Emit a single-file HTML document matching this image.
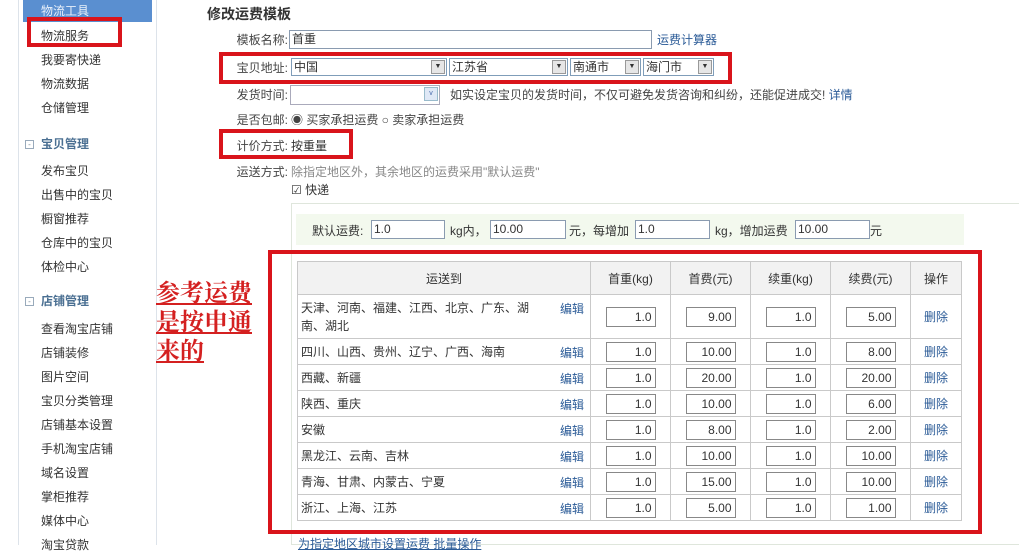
<!DOCTYPE html>
<html><head><meta charset="utf-8"><style>
*{margin:0;padding:0;box-sizing:border-box}
body{width:1019px;height:545px;overflow:hidden;background:#fff;font-family:"Liberation Sans","Noto Sans CJK SC",sans-serif;font-size:12px;color:#333;position:relative}
.a{position:absolute;white-space:nowrap}
.side{position:absolute;left:18px;top:0;width:139px;height:545px;border-left:1px solid #dde3ea;border-right:1px solid #dde3ea}
.it{position:absolute;left:41px;font-size:12px;color:#333}
.hd{position:absolute;left:41px;font-size:12px;font-weight:bold;color:#4a6f92}
.pm{position:absolute;left:25px;width:9px;height:9px;border:1px solid #9ab;font-size:8px;line-height:7px;text-align:center;color:#789}
.rb{position:absolute;border:4px solid #d9141b}
.lbl{position:absolute;width:80px;left:208px;text-align:right;color:#444}
.inp{position:absolute;border:1px solid #8a9bb0;background:#fff;height:19px;padding:1px 2px;font-size:12px;line-height:15px}
.sel{position:absolute;border:1px solid #7f9db9;background:#fff;height:18px;font-size:12px;line-height:16px;padding-left:2px}
.sel i{position:absolute;right:1px;top:1px;width:14px;height:14px;background:#e6e6e6;border:1px solid #999;font-style:normal;font-size:7px;text-align:center;line-height:12px}
.lk{color:#2b5b97}
table{position:absolute;left:297px;top:261px;border-collapse:collapse;width:665px}
td,th{border:1px solid #c9c9c9;font-weight:normal;font-size:12px}
th{background:#f2f2f2;height:33px}
td{height:26px}
td.r{padding-left:3px;position:relative}
td.r span{position:absolute;right:6px;top:5px;color:#2b5b97}
td.n{text-align:center}
td.n b{display:inline-block;width:50px;height:20px;border:1px solid #888;font-weight:normal;text-align:right;padding-right:3px;line-height:18px;vertical-align:middle}
td.d{text-align:center;color:#2b5b97}
</style></head><body>
<div class="side"></div>
<div class="a" style="left:23px;top:0;width:129px;height:22px;background:#5a8fd0"></div>
<div class="it" style="top:2px;color:#e8f0fa">物流工具</div>
<div class="it" style="top:27px">物流服务</div>
<div class="it" style="top:51px">我要寄快递</div>
<div class="it" style="top:75px">物流数据</div>
<div class="it" style="top:99px">仓储管理</div>
<div class="pm" style="top:140px">-</div><div class="hd" style="top:135px">宝贝管理</div>
<div class="it" style="top:162px">发布宝贝</div>
<div class="it" style="top:186px">出售中的宝贝</div>
<div class="it" style="top:210px">橱窗推荐</div>
<div class="it" style="top:234px">仓库中的宝贝</div>
<div class="it" style="top:258px">体检中心</div>
<div class="pm" style="top:297px">-</div><div class="hd" style="top:292px">店铺管理</div>
<div class="it" style="top:320px">查看淘宝店铺</div>
<div class="it" style="top:344px">店铺装修</div>
<div class="it" style="top:368px">图片空间</div>
<div class="it" style="top:392px">宝贝分类管理</div>
<div class="it" style="top:416px">店铺基本设置</div>
<div class="it" style="top:440px">手机淘宝店铺</div>
<div class="it" style="top:464px">域名设置</div>
<div class="it" style="top:488px">掌柜推荐</div>
<div class="it" style="top:512px">媒体中心</div>
<div class="it" style="top:536px">淘宝贷款</div>

<div class="a" style="left:207px;top:4px;font-size:14px;font-weight:bold;color:#333">修改运费模板</div>
<div class="lbl" style="top:31px">模板名称:</div>
<div class="inp" style="left:289px;top:30px;width:363px">首重</div>
<div class="a lk" style="left:657px;top:31px">运费计算器</div>
<div class="lbl" style="top:59px">宝贝地址:</div>
<div class="sel" style="left:291px;top:58px;width:156px">中国<i>▼</i></div>
<div class="sel" style="left:449px;top:58px;width:119px">江苏省<i>▼</i></div>
<div class="sel" style="left:570px;top:58px;width:71px">南通市<i>▼</i></div>
<div class="sel" style="left:643px;top:58px;width:71px">海门市<i>▼</i></div>
<div class="lbl" style="top:86px">发货时间:</div>
<div class="sel" style="left:290px;top:85px;width:150px;height:20px;border-color:#aab"><i style="background:#dfe8f6;border-color:#9bc;color:#46a">v</i></div>
<div class="a" style="left:450px;top:86px;color:#444">如实设定宝贝的发货时间，不仅可避免发货咨询和纠纷，还能促进成交! <span class="lk">详情</span></div>
<div class="lbl" style="top:111px">是否包邮:</div>
<div class="a" style="left:291px;top:111px;color:#444">◉ 买家承担运费 ○ 卖家承担运费</div>
<div class="lbl" style="top:137px">计价方式:</div>
<div class="a" style="left:291px;top:137px">按重量</div>
<div class="lbl" style="top:163px">运送方式:</div>
<div class="a" style="left:291px;top:163px;color:#888">除指定地区外，其余地区的运费采用"默认运费"</div>
<div class="a" style="left:291px;top:181px">☑ 快递</div>
<div class="a" style="left:291px;top:203px;width:730px;height:342px;border:1px solid #dfe6dc;border-right:none"></div>
<div class="a" style="left:296px;top:214px;width:668px;height:31px;background:#f3f9ee"></div>
<div class="a" style="left:312px;top:222px">默认运费:</div>
<div class="inp" style="left:371px;top:220px;width:74px">1.0</div>
<div class="a" style="left:450px;top:222px">kg内，</div>
<div class="inp" style="left:490px;top:220px;width:76px">10.00</div>
<div class="a" style="left:569px;top:222px">元，每增加</div>
<div class="inp" style="left:635px;top:220px;width:75px">1.0</div>
<div class="a" style="left:715px;top:222px">kg，增加运费</div>
<div class="inp" style="left:795px;top:220px;width:75px">10.00</div>
<div class="a" style="left:870px;top:222px">元</div>

<table>
<tr><th style="width:293px">运送到</th><th style="width:80px">首重(kg)</th><th style="width:80px">首费(元)</th><th style="width:80px">续重(kg)</th><th style="width:80px">续费(元)</th><th>操作</th></tr>
<tr><td class="r" style="height:44px;line-height:18px">天津、河南、福建、江西、北京、广东、湖<br>南、湖北<span>编辑</span></td><td class="n"><b>1.0</b></td><td class="n"><b>9.00</b></td><td class="n"><b>1.0</b></td><td class="n"><b>5.00</b></td><td class="d">删除</td></tr>
<tr><td class="r">四川、山西、贵州、辽宁、广西、海南<span>编辑</span></td><td class="n"><b>1.0</b></td><td class="n"><b>10.00</b></td><td class="n"><b>1.0</b></td><td class="n"><b>8.00</b></td><td class="d">删除</td></tr>
<tr><td class="r">西藏、新疆<span>编辑</span></td><td class="n"><b>1.0</b></td><td class="n"><b>20.00</b></td><td class="n"><b>1.0</b></td><td class="n"><b>20.00</b></td><td class="d">删除</td></tr>
<tr><td class="r">陕西、重庆<span>编辑</span></td><td class="n"><b>1.0</b></td><td class="n"><b>10.00</b></td><td class="n"><b>1.0</b></td><td class="n"><b>6.00</b></td><td class="d">删除</td></tr>
<tr><td class="r">安徽<span>编辑</span></td><td class="n"><b>1.0</b></td><td class="n"><b>8.00</b></td><td class="n"><b>1.0</b></td><td class="n"><b>2.00</b></td><td class="d">删除</td></tr>
<tr><td class="r">黑龙江、云南、吉林<span>编辑</span></td><td class="n"><b>1.0</b></td><td class="n"><b>10.00</b></td><td class="n"><b>1.0</b></td><td class="n"><b>10.00</b></td><td class="d">删除</td></tr>
<tr><td class="r">青海、甘肃、内蒙古、宁夏<span>编辑</span></td><td class="n"><b>1.0</b></td><td class="n"><b>15.00</b></td><td class="n"><b>1.0</b></td><td class="n"><b>10.00</b></td><td class="d">删除</td></tr>
<tr><td class="r">浙江、上海、江苏<span>编辑</span></td><td class="n"><b>1.0</b></td><td class="n"><b>5.00</b></td><td class="n"><b>1.0</b></td><td class="n"><b>1.00</b></td><td class="d">删除</td></tr>
</table>
<div class="a lk" style="left:298px;top:535px;text-decoration:underline">为指定地区城市设置运费 批量操作</div>

<div class="a" style="left:156px;top:276px;font-family:'Noto Serif CJK SC',serif;font-size:24px;font-weight:bold;line-height:29px;color:#d42020;text-decoration:underline;white-space:normal;width:100px">参考运费是按申通来的</div>

<div class="rb" style="left:27px;top:17px;width:95px;height:30px"></div>
<div class="rb" style="left:219px;top:52px;width:513px;height:32px"></div>
<div class="rb" style="left:219px;top:129px;width:134px;height:30px"></div>
<div class="rb" style="left:268px;top:250px;width:714px;height:284px"></div>
</body></html>
